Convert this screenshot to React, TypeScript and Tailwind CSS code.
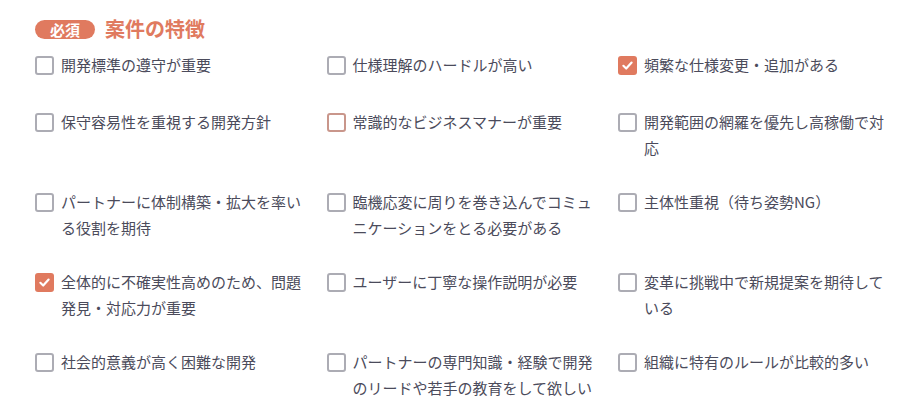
import React from 'react';

type Item = { label: string; checked?: boolean; hover?: boolean };

const items: Item[] = [
  { label: '開発標準の遵守が重要' },
  { label: '仕様理解のハードルが高い' },
  { label: '頻繁な仕様変更・追加がある', checked: true },
  { label: '保守容易性を重視する開発方針' },
  { label: '常識的なビジネスマナーが重要', hover: true },
  { label: '開発範囲の網羅を優先し高稼働で対応' },
  { label: 'パートナーに体制構築・拡大を率いる役割を期待' },
  { label: '臨機応変に周りを巻き込んでコミュニケーションをとる必要がある' },
  { label: '主体性重視（待ち姿勢NG）' },
  { label: '全体的に不確実性高めのため、問題発見・対応力が重要', checked: true },
  { label: 'ユーザーに丁寧な操作説明が必要' },
  { label: '変革に挑戦中で新規提案を期待している' },
  { label: '社会的意義が高く困難な開発' },
  { label: 'パートナーの専門知識・経験で開発のリードや若手の教育をして欲しい' },
  { label: '組織に特有のルールが比較的多い' },
];

function Box({ checked, hover }: { checked?: boolean; hover?: boolean }) {
  if (checked) {
    return (
      <span className="mt-[4px] flex h-[19px] w-[19px] shrink-0 items-center justify-center rounded-[3px] bg-[#e07a5f]">
        <svg className="h-[13px] w-[13px]" viewBox="0 0 12 12" fill="none">
          <polyline points="2.2,6.3 4.8,8.8 9.8,3.3" stroke="white" strokeWidth="2" strokeLinecap="round" strokeLinejoin="round" />
        </svg>
      </span>
    );
  }
  return (
    <span
      className={
        hover
          ? 'mt-[4px] h-[19px] w-[19px] shrink-0 rounded-[3px] border-2 border-[#c9968b] bg-white'
          : 'mt-[4px] h-[19px] w-[19px] shrink-0 rounded-[3px] border-2 border-[#acacb4] bg-white'
      }
    />
  );
}

export default function App() {
  return (
    <div className="min-h-screen bg-white pl-[35px] pt-[17px] font-['Noto_Sans_CJK_JP','Noto_Sans',sans-serif]">
      {/* Header */}
      <div className="flex h-[24px] items-center">
        <span className="flex h-[19px] w-[60px] items-center justify-center rounded-full bg-[#e07a5f] text-[15px] font-bold leading-none text-white">
          必須
        </span>
        <h2 className="ml-[10px] text-[20px] font-bold leading-none text-[#e07a5f]">案件の特徴</h2>
      </div>

      {/* Options */}
      <div className="mt-[11px] grid grid-cols-[repeat(3,291.5px)] gap-y-[28px]">
        {items.map((item, i) => (
          <label key={i} className={i < 3 ? 'flex gap-[7px] pb-[3px]' : 'flex gap-[7px]'}>
            <Box checked={item.checked} hover={item.hover} />
            <span className="w-[246px] text-[15px] leading-[26px] text-[#4b4b5b]">{item.label}</span>
          </label>
        ))}
      </div>
    </div>
  );
}
